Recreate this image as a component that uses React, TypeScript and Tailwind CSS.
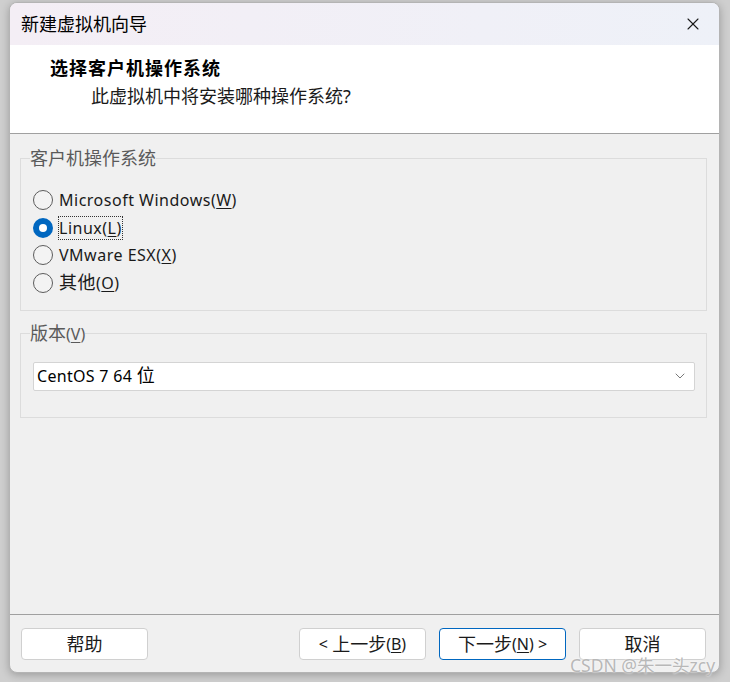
import { X, ChevronDown } from "lucide-react";

const FONT = { fontFamily: '"Noto Sans", "Noto Sans CJK SC", sans-serif' };

// CJK glyphs in the reference render a bit larger than the Latin ones
const C = ({ children }: { children: React.ReactNode }) => <span className="text-[18px] leading-[20px]">{children}</span>;
const U = ({ children }: { children: React.ReactNode }) => <span className="underline underline-offset-2">{children}</span>;

type Option = { id: string; label: React.ReactNode };

const options: Option[] = [
  { id: "win", label: <>Microsoft Windows(<U>W</U>)</> },
  { id: "linux", label: <>Linux(<U>L</U>)</> },
  { id: "esx", label: <>VMware ESX(<U>X</U>)</> },
  { id: "other", label: <><C>其他</C>(<U>O</U>)</> },
];

const Radio = ({ checked }: { checked: boolean }) =>
  checked ? (
    <span className="flex h-[20px] w-[20px] shrink-0 items-center justify-center rounded-full bg-[#0067c0]">
      <span className="h-[8px] w-[8px] rounded-full bg-white" />
    </span>
  ) : (
    <span className="h-[20px] w-[20px] shrink-0 rounded-full border border-[#5c5c5c] bg-[#f3f3f3]" />
  );

const Button = ({ children, primary }: { children: React.ReactNode; primary?: boolean }) => (
  <button
    className={
      primary
        ? "flex h-[32px] w-[127px] items-center justify-center whitespace-pre rounded-[4px] border border-[#0067c0] bg-white text-[16px] leading-[20px] text-[#1a1a1a]"
        : "flex h-[32px] w-[127px] items-center justify-center whitespace-pre rounded-[4px] border border-[#d0d0d0] bg-white text-[16px] leading-[20px] text-[#1a1a1a]"
    }
  >
    {children}
  </button>
);

export default function App() {
  const selected = "linux";

  return (
    <div className="h-[682px] w-[730px] overflow-hidden bg-[#cfcfcf] pl-[9px] pt-[2px]" style={FONT}>
      <div className="relative flex h-[671px] w-[711px] flex-col overflow-hidden rounded-[8px] border border-[#b4b4b4] bg-[#f0f0f0] shadow-[0_2px_8px_rgba(0,0,0,0.25)]">
        {/* title bar */}
        <div className="flex h-[42px] shrink-0 items-center justify-between bg-gradient-to-r from-[#f4eef5] to-[#eef1f8] pl-[11px] pr-[16px]">
          <span className="text-[18px] leading-[24px] text-black">新建虚拟机向导</span>
          <X size={20} strokeWidth={1.3} className="text-[#1a1a1a]" />
        </div>

        {/* header */}
        <div className="flex h-[89px] shrink-0 flex-col border-b border-[#a0a0a0] bg-white pl-[40px] pt-[11px]">
          <span className="text-[18px] font-bold leading-[24px] tracking-[1px] text-black">选择客户机操作系统</span>
          <span className="ml-[41px] mt-[4px] text-[18px] leading-[24px] text-[#1a1a1a]">此虚拟机中将安装哪种操作系统?</span>
        </div>

        {/* body */}
        <div className="flex flex-1 flex-col pl-[10px] pr-[12px]">
          <fieldset className="mt-[13px] border border-[#dcdcdc] pb-[13px] pl-[12px] pt-[17px]">
            <legend className="-ml-[3px] text-[18px] leading-[22px] text-[#5a5a5a]">客户机操作系统</legend>
            <div className="flex flex-col">
              {options.map((o) => (
                <div key={o.id} className="flex h-[27.7px] items-center gap-[5px]">
                  <Radio checked={o.id === selected} />
                  <span
                    className={
                      o.id === selected
                        ? "border border-dotted border-[#333] text-[16px] leading-[22px] tracking-[0.5px] text-[#1a1a1a]"
                        : "border border-transparent text-[16px] leading-[22px] tracking-[0.5px] text-[#1a1a1a]"
                    }
                  >
                    {o.label}
                  </span>
                </div>
              ))}
            </div>
          </fieldset>

          <fieldset className="mt-[12px] border border-[#dcdcdc] pb-[26px] pl-[12px] pr-[11px] pt-[17px]">
            <legend className="-ml-[3px] text-[16px] leading-[22px] text-[#5a5a5a]">
              <C>版本</C>(<U>V</U>)
            </legend>
            <div className="flex h-[29px] items-center justify-between rounded-[2px] border border-[#d4d4d4] bg-white pl-[3px] pr-[6px]">
              <span className="text-[16px] leading-[22px] tracking-[0.3px] text-black">
                CentOS 7 64 <C>位</C>
              </span>
              <ChevronDown size={16} strokeWidth={1.2} className="text-[#555]" />
            </div>
          </fieldset>
        </div>

        {/* footer */}
        <div className="flex h-[58px] shrink-0 items-center border-t border-[#a0a0a0] pl-[11px] pr-[13px]">
          <Button>
            <C>帮助</C>
          </Button>
          <div className="ml-auto flex gap-[13px]">
            <Button>
              {"< "}
              <C>上一步</C>(<U>B</U>)
            </Button>
            <Button primary>
              <C>下一步</C>(<U>N</U>){" >"}
            </Button>
            <Button>
              <C>取消</C>
            </Button>
          </div>
        </div>
      </div>
      <span
        className="absolute left-[570px] top-[657px] text-[17.5px] leading-[16px] text-[#b8b8b8]"
        style={{ textShadow: "0 0 2px #fff" }}
      >
        CSDN @朱一头zcy
      </span>
    </div>
  );
}
